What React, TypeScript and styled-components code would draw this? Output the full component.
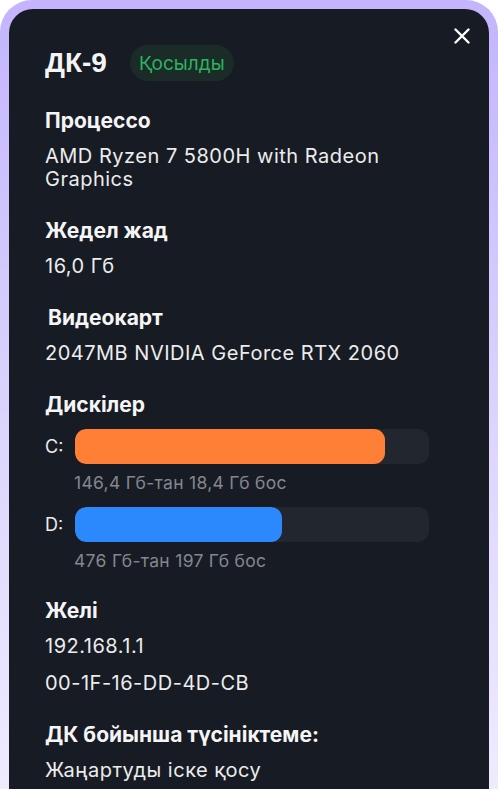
import React from 'react';
import styled, { createGlobalStyle } from 'styled-components';

const GlobalStyle = createGlobalStyle`
  html, body {
    margin: 0;
    padding: 0;
    background: #ffffff;
  }
  body {
    font-family: Inter, 'Noto Sans', sans-serif;
    -webkit-font-smoothing: antialiased;
  }
`;

const Frame = styled.div`
  display: flex;
  flex-direction: column;
  height: 100vh;
  overflow: hidden;
  padding: 9px 9px 0;
  border-radius: 32px 32px 0 0;
  background: linear-gradient(180deg, #c3b4fd 0%, #ddd5fc 55%, #efebfe 100%);
  box-sizing: border-box;
`;

const Panel = styled.div`
  position: relative;
  flex: 1;
  background: #171c24;
  border-radius: 24px 24px 0 0;
  padding: 36px 36px 0;
  box-sizing: border-box;
  display: flex;
  flex-direction: column;
  gap: 28px;
`;

const CloseButton = styled.button`
  position: absolute;
  top: 17px;
  right: 17px;
  width: 20px;
  height: 20px;
  padding: 0;
  border: none;
  background: transparent;
  color: #ffffff;
  display: flex;
  align-items: center;
  justify-content: center;
  cursor: pointer;
`;

const TitleRow = styled.div`
  display: flex;
  align-items: center;
  gap: 23px;
  height: 36px;
`;

const Title = styled.h1`
  margin: 0;
  font-family: 'Liberation Sans', Arial, sans-serif;
  font-size: 28px;
  font-weight: 700;
  color: #f4f4f5;
  line-height: 32px;
`;

const Badge = styled.span`
  display: inline-flex;
  align-items: center;
  height: 36px;
  padding: 0 9px;
  border-radius: 18px;
  background: #1b2b27;
  color: #2bb35f;
  font-size: 19px;
`;

const Section = styled.section<{ $shift?: number }>`
  display: flex;
  flex-direction: column;
  gap: 12px;
  padding-left: ${(p) => p.$shift ?? 0}px;
`;

const Heading = styled.h2`
  margin: 0;
  font-size: 21px;
  line-height: 24px;
  font-weight: 700;
  color: #f5f5f5;
`;

const Value = styled.p`
  margin: 0;
  font-size: 20px;
  letter-spacing: 0.5px;
  line-height: 23px;
  color: #ececec;
`;

const Values = styled.div`
  display: flex;
  flex-direction: column;
  gap: 14px;
`;

const DiskList = styled.div`
  display: flex;
  flex-direction: column;
  gap: 14px;
  width: 384px;
`;

const Disk = styled.div`
  display: grid;
  grid-template-columns: 30px 1fr;
  row-gap: 9px;
  align-items: center;
`;

const DiskLabel = styled.span`
  font-size: 18px;
  color: #ececec;
`;

const Track = styled.div`
  height: 35px;
  border-radius: 11px;
  background: #22262f;
  overflow: hidden;
`;

const Fill = styled.div<{ $color: string }>`
  height: 100%;
  border-radius: 11px;
  background: ${(p) => p.$color};
`;

const Caption = styled.span`
  grid-column: 2;
  font-size: 17.5px;
  letter-spacing: 0.3px;
  line-height: 20px;
  color: #84878d;
  margin-left: -1px;
`;

const disks = [
  { name: 'C:', total: 146.4, free: 18.4, label: '146,4 Гб-тан 18,4 Гб бос', color: '#ff7f36' },
  { name: 'D:', total: 476, free: 197, label: '476 Гб-тан 197 Гб бос', color: '#2c88fd' },
];

export default function App() {
  return (
    <>
      <GlobalStyle />
      <Frame>
        <Panel>
          <CloseButton aria-label='Жабу'>
            <svg width='16' height='16' viewBox='0 0 16 16' fill='none'>
              <path d='M1.5 1.5L14.5 14.5M14.5 1.5L1.5 14.5' stroke='currentColor' strokeWidth='2.4' strokeLinecap='round' />
            </svg>
          </CloseButton>

          <TitleRow>
            <Title>ДК-9</Title>
            <Badge>Қосылды</Badge>
          </TitleRow>

          <Section>
            <Heading>Процессо</Heading>
            <Value>AMD Ryzen 7 5800H with Radeon Graphics</Value>
          </Section>

          <Section $shift={-1}>
            <Heading>Жедел жад</Heading>
            <Value>16,0 Гб</Value>
          </Section>

          <Section>
            <Heading style={{ marginLeft: 3 }}>Видеокарт</Heading>
            <Value>2047MB NVIDIA GeForce RTX 2060</Value>
          </Section>

          <Section>
            <Heading>Дискілер</Heading>
            <DiskList>
              {disks.map((d) => (
                <Disk key={d.name}>
                  <DiskLabel>{d.name}</DiskLabel>
                  <Track>
                    <Fill $color={d.color} style={{ width: `${((d.total - d.free) / d.total) * 100}%` }} />
                  </Track>
                  <Caption>{d.label}</Caption>
                </Disk>
              ))}
            </DiskList>
          </Section>

          <Section>
            <Heading>Желі</Heading>
            <Values>
              <Value>192.168.1.1</Value>
              <Value>00-1F-16-DD-4D-CB</Value>
            </Values>
          </Section>

          <Section>
            <Heading>ДК бойынша түсініктеме:</Heading>
            <Value>Жаңартуды іске қосу</Value>
          </Section>
        </Panel>
      </Frame>
    </>
  );
}
